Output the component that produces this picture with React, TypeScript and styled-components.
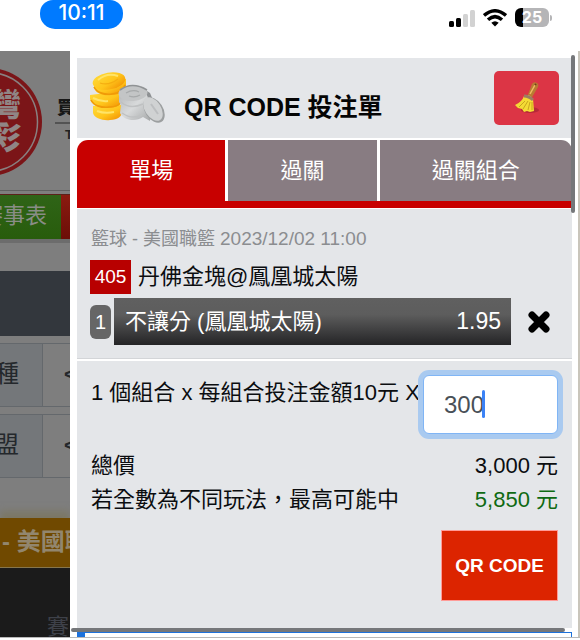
import React, { useState } from "react";
import styled, { createGlobalStyle, css } from "styled-components";

const GlobalStyle = createGlobalStyle`
  *, *::before, *::after { box-sizing: border-box; }
  body {
    margin: 0;
    background: #fff;
    color: #0b0d10;
    font-family: "Liberation Sans", "Noto Sans CJK TC", sans-serif;
    font-size: 22px;
    line-height: 34px;
  }
  button, input { font: inherit; margin: 0; }
`;

const Screen = styled.div`
  display: flex;
  flex-direction: column;
  min-height: 100vh;
  overflow: hidden;
`;

const StatusBar = styled.header`
  display: flex;
  justify-content: space-between;
  align-items: flex-start;
  height: 51px;
  padding: 0 28px 0 40px;
`;

const Clock = styled.time`
  width: 83px;
  height: 29px;
  border-radius: 13px 13px 15px 15px;
  background: #007aff;
  color: #fff;
  font-family: Inter, sans-serif;
  font-size: 21px;
  font-weight: 500;
  line-height: 26px;
  text-align: center;
`;

const StatusIcons = styled.div`
  display: flex;
  align-items: center;
  gap: 8px;
  padding-top: 8px;
`;

const Battery = styled.div`
  display: flex;
  align-items: center;
  gap: 1px;
  &::after {
    content: "";
    width: 2px;
    height: 6px;
    border-radius: 0 2px 2px 0;
    background: #b5b5b7;
  }
`;

const BatteryBody = styled.span`
  width: 34px;
  height: 19px;
  border-radius: 6px;
  background: linear-gradient(90deg, #000 25%, #b5b5b7 25%);
  color: #fff;
  font-family: Inter, sans-serif;
  font-size: 16px;
  font-weight: 700;
  line-height: 19px;
  text-align: center;
`;

const Body = styled.div`
  display: grid;
  grid-template-columns: 70px 1fr;
  flex: 1;
  border-bottom: 1px solid #b9b9b9;
  margin-bottom: 2px;
`;

const Backdrop = styled.div`
  display: flex;
  flex-direction: column;
  overflow: hidden;
  background: #7e7e7e;
  white-space: nowrap;
`;

const Brand = styled.div`
  height: 140px;
  border-bottom: 1px solid #606060;
  svg { display: block; }
`;

const NavStrip = styled.nav`
  display: flex;
  height: 49px;
  margin-top: 3px;
  border-top: 1px solid #5b211a;
  border-bottom: 4px solid #6c6c6c;
  background: linear-gradient(#8b1b10, #6c0e07);
`;

const NavLink = styled.a`
  display: flex;
  justify-content: flex-end;
  width: 61px;
  padding-right: 14px;
  background: linear-gradient(#2f6417, #285c0c);
  color: #898d86;
  line-height: 42px;
  text-decoration: none;
`;

const DarkBand = styled.div`
  height: 65px;
  margin: 28px 0 7px;
  background: #33373d;
`;

const FilterRow = styled.div`
  display: flex;
  height: 64px;
  margin-bottom: 7px;
  border: 1px solid #64686c;
  border-width: 1px 0;
  color: #24282c;
  font-size: 24px;
  line-height: 60px;
`;

const FilterName = styled.span`
  display: flex;
  justify-content: flex-end;
  width: 43px;
  padding-right: 23px;
  border-right: 1px solid #64686c;
  background: #74777a;
`;

const FilterArrow = styled.span`
  padding-left: 21px;
  font-size: 20px;
  font-weight: 700;
`;

const LeagueBar = styled.div`
  height: 50px;
  margin-top: 33px;
  padding-left: 2px;
  background: #704900;
  border-bottom: 1px solid #86764d;
  box-shadow: 0 -7px 7px #7c7866;
  color: #92866e;
  font-size: 24px;
  font-weight: 700;
  line-height: 48px;
`;

const MatchHead = styled.div`
  flex: 1 1 0;
  min-height: 0;
  padding: 42px 0 0 47px;
  overflow: hidden;
  background: #1b1b1b;
  color: #3e4149;
`;

const Drawer = styled.aside`
  position: relative;
  display: flex;
  flex-direction: column;
  padding: 7px 6px 0 7px;
  border-right: 2px solid #c9c5bb;
`;

const ScrollThumb = styled.span<{ $axis: "x" | "y" }>`
  position: absolute;
  border-radius: 2px;
  background: #75777a;
  ${({ $axis }) =>
    $axis === "y"
      ? css`top: 4px; right: 3px; width: 4px; height: 158px;`
      : css`bottom: 5px; left: 1px; right: 13px; height: 4px;`}
`;

const TitleRow = styled.div`
  display: flex;
  align-items: center;
  height: 80px;
  padding: 0 13px;
  background: #e4e6e9;
`;

const Title = styled.h1`
  flex: 1;
  margin: 18px 0 0 17px;
  color: #050505;
  font-size: 25px;
  font-weight: 700;
  line-height: 36px;
`;

const ClearButton = styled.button`
  display: grid;
  place-items: center;
  width: 65px;
  height: 54px;
  padding: 0;
  border: 0;
  border-radius: 5px;
  background: #dc3545;
`;

const Tabs = styled.div`
  display: grid;
  grid-template-columns: 37fr 37fr 48fr;
  gap: 3px;
  margin: 2px 0 1px;
  overflow: hidden;
  border-bottom: 7px solid #c80000;
  border-radius: 11px 11px 0 0;
`;

const Tab = styled.button<{ $active?: boolean }>`
  height: 61px;
  padding: 0;
  border: 0;
  background: ${({ $active }) => ($active ? "#c80000" : "#887c82")};
  color: #fff;
`;

const Section = styled.section`
  padding: 13px 14px 0 14px;
  background: #e4e6e9;
`;

const Bet = styled(Section)`
  height: 150px;
  border-bottom: 1px solid #d3d5d8;
`;

const League = styled.p`
  margin: 0;
  color: #8b8d90;
  font-size: 18px;
  > time { font-size: 19px; }
`;

const Match = styled.div`
  display: flex;
  align-items: center;
  gap: 7px;
  margin-top: 4px;
`;

const MatchNo = styled.span`
  width: 41px;
  margin-left: -1px;
  background: #b80000;
  color: #fff;
  font-size: 19px;
  text-align: center;
`;

const Pick = styled.div`
  display: flex;
  align-items: center;
  margin: 4px 7px 0 -1px;
`;

const PickNo = styled.span`
  width: 21px;
  margin-right: 3px;
  border-radius: 6px;
  background: #666;
  color: #fff;
  font-size: 20px;
  text-align: center;
`;

const PickBar = styled.div`
  display: flex;
  flex: 1;
  justify-content: space-between;
  padding: 0 10px 0 11px;
  background: linear-gradient(#606060, #5d5d5d 35%, #242426);
  color: #fff;
  line-height: 47px;
`;

const Odds = styled.span`
  font-size: 23px;
`;

const RemoveButton = styled.button`
  width: 24px;
  height: 24px;
  margin-left: 16px;
  padding: 0;
  border: 0;
  background: none;
  svg { display: block; }
`;

const Summary = styled(Section)`
  flex: 1;
  margin-top: 2px;
`;

const Stake = styled.div`
  display: flex;
  justify-content: space-between;
  align-items: flex-start;
  height: 75px;
  white-space: nowrap;
`;

const StakeLabel = styled.label`
  padding-top: 2px;
`;

const StakeInput = styled.input`
  width: 135px;
  height: 59px;
  margin-top: 1px;
  padding: 0 0 0 20px;
  border: 1px solid #80b5f5;
  border-radius: 6px;
  outline: 0;
  box-shadow: 0 0 0 5px #a9caf0;
  color: #495057;
  font-size: 24px;
`;

const StakeField = styled.div`
  position: relative;
`;

const Caret = styled.span`
  position: absolute;
  top: 16px;
  left: 59px;
  width: 3px;
  height: 28px;
  border-radius: 2px;
  background: #3b82f6;
`;

const Amount = styled.p<{ $win?: boolean }>`
  display: flex;
  justify-content: space-between;
  margin: 0;
  > output { color: ${({ $win }) => ($win ? "#0f6a12" : "inherit")}; }
`;

const SubmitButton = styled.button`
  display: block;
  width: 117px;
  height: 71px;
  margin: 13px 0 26px auto;
  padding: 0;
  border: 1px solid #ff9c98;
  background: #dc2400;
  color: #fff;
  font-size: 19px;
  font-weight: 700;
`;

const NextPanel = styled.div`
  height: 5px;
  margin-top: 4px;
  border: solid #1d72dc;
  border-width: 1px 1px 0 8px;
`;

const Signal = () => (
  <svg width="26" height="18" viewBox="0 0 26 18" aria-hidden="true">
    <rect x="0" y="12" width="5" height="6" rx="1.5" fill="#000" />
    <rect x="7" y="9" width="5" height="9" rx="1.5" fill="#000" />
    <rect x="14" y="5" width="5" height="13" rx="1.5" fill="#d2d2d2" />
    <rect x="21" y="1" width="5" height="17" rx="1.5" fill="#d2d2d2" />
  </svg>
);

const Wifi = () => (
  <svg width="24" height="18" viewBox="0 0 24 18" aria-hidden="true" fill="none" stroke="#000" strokeWidth="3.4">
    <path d="M1 6.500Q12-3 23 6.500M5 10.800Q12 4.400 19 10.800" />
    <path d="M12 17.500l-3.700-3.800q3.700-3 7.400 0z" fill="#000" stroke="none" />
  </svg>
);

const Logo = () => (
  <svg width="70" height="139" viewBox="0 0 70 139" aria-hidden="true" fontFamily="Noto Sans CJK TC, sans-serif" fontWeight="900">
    <circle cx="-12" cy="71" r="54" fill="#7b1518" />
    <circle cx="-12" cy="71" r="49.5" fill="none" stroke="#898080" strokeWidth="1.5" />
    <g fill="#908585" fontSize="32">
      <text x="-11" y="65">灣</text>
      <text x="-11" y="98" transform="rotate(8 4 84)">彩</text>
    </g>
    <text x="57" y="63" fill="#171717" fontSize="18">買</text>
    <path d="M55 72h15" stroke="#292929" />
    <text x="65" y="88" fill="#222" fontSize="13" fontFamily="Liberation Sans, sans-serif">T</text>
  </svg>
);

const Coins = () => (
  <svg width="77" height="54" viewBox="0 0 77 54" aria-hidden="true">
    <defs>
      <linearGradient id="gold" x2="1" y2="1">
        <stop stopColor="#ffdc3c" />
        <stop offset=".55" stopColor="#ffc51b" />
        <stop offset="1" stopColor="#f08a00" />
      </linearGradient>
      <linearGradient id="silver" x2="1" y2="1">
        <stop stopColor="#b4b6b7" />
        <stop offset=".5" stopColor="#d8dadb" />
        <stop offset="1" stopColor="#a6a8a9" />
      </linearGradient>
    </defs>
    <g fill="url(#gold)">
      <path d="M3 35v7c1 5 10 8 17 7 8 0 12-4 12-8v-7z" />
      <path d="M0 24v4c2 7 10 9 18 9 9 0 14-4 15-9v-8z" />
      <path d="M4 11v5c1 7 10 9 17 8 9 0 15-4 15-10V8z" />
      <ellipse cx="19" cy="10" rx="16.5" ry="8.5" transform="rotate(-10 19 10)" />
    </g>
    <path
      d="M4 16c3 6 11 8 18 7 8-1 12-5 13-9M1 29c3 6 11 8 18 7 7 0 11-2 13-6"
      fill="none"
      stroke="#f09a08"
      strokeWidth="1.6"
    />
    <path d="M10 12q9 3 18-4" fill="none" stroke="#f5ad10" strokeWidth="1.2" />
    <path d="M8 9q9-8 20-4M3 27q8 4 15 3M7 40q8 3 17 1" fill="none" stroke="#ffe468" strokeWidth="2" />
    <path d="M54 18l6 4 3 7-5 3z" fill="#8e9193" />
    <path d="M29 23v8l2 3-1 8c4 8 16 9 23 4l7 4V31l-5-11z" fill="url(#silver)" />
    <path d="M31 31q9 8 22 2M32 42q10 7 20 2" fill="none" stroke="#bfc1c2" strokeWidth="1.5" />
    <ellipse cx="43" cy="22" rx="14.500" ry="8" fill="#c3c5c6" transform="rotate(-3 43 22)" />
    <path d="M30 19q12-9 27 0" fill="none" stroke="#909395" strokeWidth="1.600" />
    <path d="M36 22q7-4 13-1M39 25q6 2 11-1" fill="none" stroke="#a6a9aa" strokeWidth="1.300" />
    <ellipse cx="64" cy="39" rx="9" ry="14" fill="#9c9fa0" transform="rotate(-33 64 39)" />
    <ellipse cx="63" cy="38" rx="8" ry="13" fill="#d0d2d3" transform="rotate(-33 63 38)" />
    <path d="M61 33l7 10" stroke="#bcbec0" strokeWidth="2" />
  </svg>
);

const Broom = () => (
  <svg width="26" height="34" viewBox="0 0 26 34" aria-hidden="true">
    <ellipse cx="16" cy="29" rx="9" ry="3" fill="#b62938" />
    <path d="M13 16L18 3q2-3 5-1 2 1 1 4l-7 12z" fill="#b97a32" />
    <path d="M16 13l5-9" stroke="#edbd63" strokeWidth="1.5" />
    <circle cx="21.5" cy="3.5" r="1" fill="#70401c" />
    <path d="M10 15q5-3 9 3l1 12-4 1-3-1-3 1-2-3-4-1-3-3q7-3 9-9z" fill="#f4db35" />
    <path d="M11 20L5 26M14 20L9 28M16 21l-2 8M18 21v8" stroke="#c8a51d" />
    <path d="M10 15q5 0 9 4" fill="none" stroke="#9e7b63" strokeWidth="3" />
  </svg>
);

const tabNames = ["單場", "過關", "過關組合"];

export default function App() {
  const [tab, setTab] = useState(0);
  const [stake, setStake] = useState("300");
  const count = Number(stake) || 0;

  return (
    <Screen>
      <GlobalStyle />
      <StatusBar>
        <Clock>10:11</Clock>
        <StatusIcons>
          <Signal />
          <Wifi />
          <Battery><BatteryBody>25</BatteryBody></Battery>
        </StatusIcons>
      </StatusBar>
      <Body>
        <Backdrop>
          <Brand><Logo /></Brand>
          <NavStrip><NavLink href="#schedule">賽事表</NavLink></NavStrip>
          <DarkBand />
          <FilterRow><FilterName>種</FilterName><FilterArrow>&lt;</FilterArrow></FilterRow>
          <FilterRow><FilterName>盟</FilterName><FilterArrow>&lt;</FilterArrow></FilterRow>
          <LeagueBar>- 美國職籃</LeagueBar>
          <MatchHead>賽</MatchHead>
        </Backdrop>
        <Drawer>
          <TitleRow>
            <Coins />
            <Title>QR CODE 投注單</Title>
            <ClearButton type="button" aria-label="清除"><Broom /></ClearButton>
          </TitleRow>
          <Tabs role="tablist">
            {tabNames.map((name, i) => (
              <Tab key={name} type="button" role="tab" aria-selected={tab === i} $active={tab === i} onClick={() => setTab(i)}>
                {name}
              </Tab>
            ))}
          </Tabs>
          <Bet>
            <League>籃球 - 美國職籃 <time dateTime="2023-12-02T11:00">2023/12/02 11:00</time></League>
            <Match><MatchNo>405</MatchNo>丹佛金塊@鳳凰城太陽</Match>
            <Pick>
              <PickNo>1</PickNo>
              <PickBar><span>不讓分 (鳳凰城太陽)</span><Odds>1.95</Odds></PickBar>
              <RemoveButton type="button" aria-label="移除">
                <svg width="24" height="24" viewBox="0 0 24 24" aria-hidden="true">
                  <path d="M5 5l14 14M19 5L5 19" stroke="#000" strokeWidth="7" strokeLinecap="round" />
                </svg>
              </RemoveButton>
            </Pick>
          </Bet>
          <Summary>
            <Stake>
              <StakeLabel htmlFor="stake">1 個組合 x 每組合投注金額10元 X</StakeLabel>
              <StakeField>
                <StakeInput id="stake" inputMode="numeric" value={stake} onChange={(e) => setStake(e.target.value)} />
                <Caret />
              </StakeField>
            </Stake>
            <Amount><span>總價</span><output>{(count * 10).toLocaleString("en-US")} 元</output></Amount>
            <Amount $win><span>若全數為不同玩法，最高可能中</span><output>{(count * 19.5).toLocaleString("en-US")} 元</output></Amount>
            <SubmitButton type="button">QR CODE</SubmitButton>
          </Summary>
          <NextPanel />
          <ScrollThumb $axis="y" />
          <ScrollThumb $axis="x" />
        </Drawer>
      </Body>
    </Screen>
  );
}
